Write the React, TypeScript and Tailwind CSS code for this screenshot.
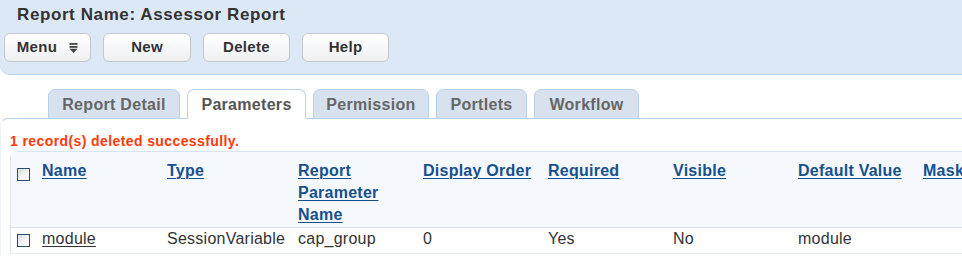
import React from "react";

const font = { fontFamily: '"Liberation Sans", Arial, sans-serif' };

function MenuIcon() {
  return (
    <svg width="9" height="10" viewBox="0 0 9 10" className="ml-[12px]">
      <rect x="0.5" y="0" width="8" height="1.8" fill="#444" />
      <rect x="0.5" y="3" width="8" height="1.8" fill="#444" />
      <polygon points="0.5,5.8 8.5,5.8 4.5,10" fill="#444" />
    </svg>
  );
}

function Btn({ children, w }: { children: React.ReactNode; w: string }) {
  return (
    <div
      className={`${w} h-[29px] flex items-center justify-center rounded-[6px] border border-[#c4c8cc] bg-gradient-to-b from-[#ffffff] to-[#eef0f2] text-[15px] tracking-[0.3px] font-bold text-[#333] shadow-[inset_0_1px_0_#fff]`}
    >
      {children}
    </div>
  );
}

function Checkbox() {
  return (
    <div className="w-[13px] h-[13px] border border-[#2e4d70] bg-gradient-to-br from-[#d8d8d8] via-[#f4f4f4] to-[#ffffff]" />
  );
}

const tabs = [
  { label: "Report Detail", w: "w-[132px]", active: false },
  { label: "Parameters", w: "w-[119px]", active: true },
  { label: "Permission", w: "w-[116px]", active: false },
  { label: "Portlets", w: "w-[91px]", active: false },
  { label: "Workflow", w: "w-[105px]", active: false },
];

function HeaderLink({ children }: { children: React.ReactNode }) {
  return (
    <span className="underline decoration-[1px] underline-offset-[2px] text-[#17508e] font-bold">
      {children}
    </span>
  );
}

export default function App() {
  const cols = "grid grid-cols-[31px_125px_131px_125px_125px_125px_125px_125px_125px]";
  return (
    <div className="w-[962px] h-[256px] overflow-hidden bg-white" style={font}>
      <div className="h-[75px] bg-[#dce8f5] border-b border-[#b7d2ec] rounded-bl-[10px] pt-[5px]">
        <div className="pl-[17px] text-[17px] tracking-[0.6px] leading-[20px] font-bold text-[#333]">
          Report Name: Assessor Report
        </div>
        <div className="flex mt-[8px] pl-[4px] gap-[12px]">
          <Btn w="w-[87px]">
            <span>Menu</span>
            <MenuIcon />
          </Btn>
          <Btn w="w-[88px]">New</Btn>
          <Btn w="w-[87px]">Delete</Btn>
          <Btn w="w-[87px]">Help</Btn>
        </div>
      </div>

      <div className="mt-[14px] flex items-end pl-[48px] gap-[7px] h-[29px] relative z-10">
        {tabs.map((t) => (
          <div
            key={t.label}
            className={`${t.w} h-[30px] -mb-px pt-[2px] flex items-center justify-center rounded-t-[7px] border border-[#b7d2ec] text-[16px] tracking-[0.3px] font-bold ${
              t.active ? "bg-white border-b-white text-[#555]" : "bg-[#d7e2ee] text-[#666]"
            }`}
          >
            {t.label}
          </div>
        ))}
      </div>

      <div className="border-l border-t border-l-[#eef3f9] border-t-[#b7d2ec] rounded-tl-[8px] pt-[14px] h-[200px]">
        <div className="pl-[9px] text-[14px] tracking-[0.4px] leading-[16px] font-bold text-[#ff3a0a]">
          1 record(s) deleted successfully.
        </div>

        <div className="ml-[9px] mt-[2px] w-[1100px] border-l border-t border-[#d6e4f2] rounded-tl-[8px] text-[16px] tracking-[0.25px] leading-[22px]">
          <div className={`${cols} bg-[#f5f9fd] h-[76px] pt-[8px] border-b border-[#d8e3ee]`}>
            <div className="pl-[6px] pt-[8px]">
              <Checkbox />
            </div>
            <div><HeaderLink>Name</HeaderLink></div>
            <div><HeaderLink>Type</HeaderLink></div>
            <div className="flex flex-col items-start">
              <HeaderLink>Report</HeaderLink>
              <HeaderLink>Parameter</HeaderLink>
              <HeaderLink>Name</HeaderLink>
            </div>
            <div><HeaderLink>Display Order</HeaderLink></div>
            <div><HeaderLink>Required</HeaderLink></div>
            <div><HeaderLink>Visible</HeaderLink></div>
            <div><HeaderLink>Default Value</HeaderLink></div>
            <div><HeaderLink>Mask</HeaderLink></div>
          </div>
          <div className={`${cols} bg-white h-[26px] border-b border-[#e6ebf0] text-[#333]`}>
            <div className="pl-[6px] pt-[6px]">
              <Checkbox />
            </div>
            <div>
              <span className="underline underline-offset-[2px] decoration-[1px]">module</span>
            </div>
            <div>SessionVariable</div>
            <div>cap_group</div>
            <div>0</div>
            <div>Yes</div>
            <div>No</div>
            <div>module</div>
            <div></div>
          </div>
        </div>
      </div>
    </div>
  );
}
